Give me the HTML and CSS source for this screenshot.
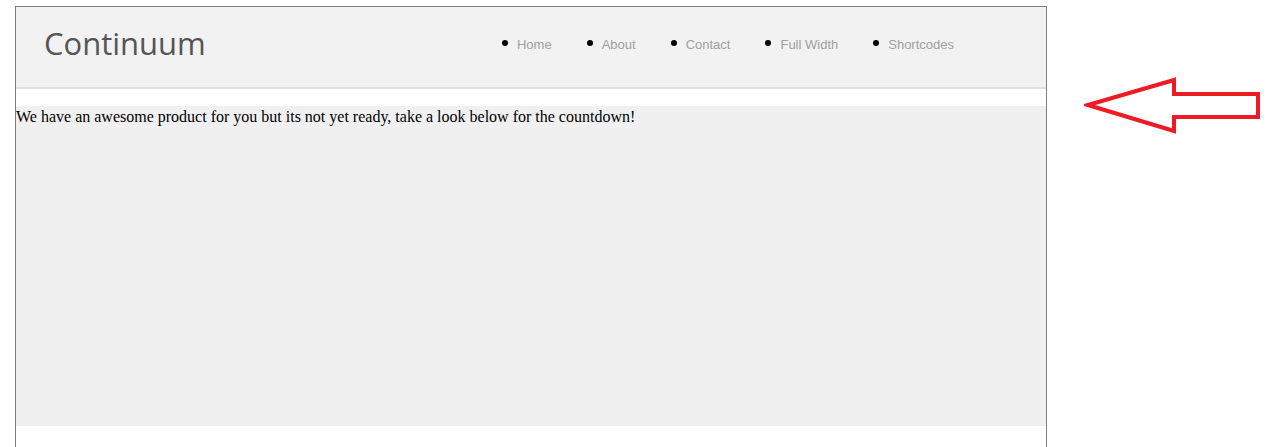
FILE: index.html
```html
<!DOCTYPE html>
<html lang="en">
<head>
    <meta charset="UTF-8">
    <title>Continuum - Coming Soon</title>
    <link rel="stylesheet" href="styles.css">
</head>
<body>
    <div class="page">
        <!-- header with logo and menu -->
        <header class="site-header">
            <div class="logo">Continuum</div>
            <ul class="menu">
                <li><a href="#">Home</a></li>
                <li><a href="#">About</a></li>
                <li><a href="#">Contact</a></li>
                <li><a href="#">Full Width</a></li>
                <li><a href="#">Shortcodes</a></li>
            </ul>
        </header>

        <!-- main content -->
        <div class="content">
            We have an awesome product for you but its not yet ready, take a look below for the countdown!
        </div>
    </div>

    <!-- annotation arrow -->
    <svg class="arrow" width="180" height="60" viewBox="1084 76 180 60">
        <polygon points="1088,105 1174,80 1174,94 1258,94 1258,117 1174,117 1174,131" fill="none" stroke="#ed1c24" stroke-width="4" stroke-linejoin="miter"/>
    </svg>
</body>
</html>
```

FILE: styles.css
```css
body {
    margin: 0;
    background-color: #ffffff;
    font-family: "Liberation Serif", "Times New Roman", serif;
}

/* main frame */
.page {
    width: 1030px;
    min-height: 460px;
    margin: 6px 0 0 15px;
    border: 1px solid #808080;
    border-bottom: none;
}

.site-header {
    display: flex;
    align-items: center;
    justify-content: space-between;
    height: 80px;
    padding: 0 92px 0 28px;
    background-color: #f2f2f2;
    border-bottom: 2px solid #e0e0e0;
}

.logo {
    font-family: "Open Sans", "Noto Sans", sans-serif;
    font-size: 31px;
    color: #555555;
    margin-top: -8px;
}

/* menu */
.menu {
    display: flex;
    gap: 35px;
    list-style: none;
    margin: -6px 0 0 0;
    padding: 0;
    font-family: "Liberation Sans", Arial, sans-serif;
    font-size: 13px;
}

.menu li {
    display: flex;
    align-items: center;
}

.menu li::before {
    content: "";
    width: 6px;
    height: 6px;
    border-radius: 50%;
    background-color: #000;
    margin-right: 9px;
    margin-top: -2px;
}

.menu a {
    color: #a0a0a0;
    text-decoration: none;
}

/* content area */
.content {
    margin-top: 17px;
    height: 320px;
    background-color: #f0f0f0;
    font-size: 16px;
    line-height: 22px;
    color: #000;
}

.arrow {
    position: absolute;
    left: 1084px;
    top: 76px;
}
```
